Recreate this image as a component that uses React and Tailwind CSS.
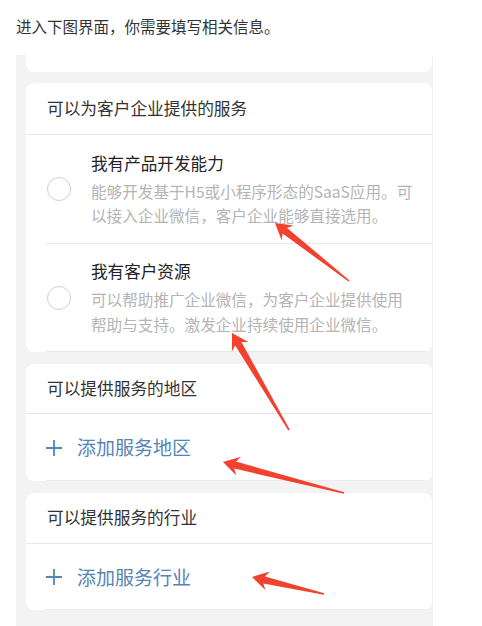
import React from "react";

const arrows = [
  [275, 223, 349, 281],
  [232, 333, 289, 430],
  [223, 462, 344, 493],
  [252, 577, 324, 594],
];

function arrowPoints([tx, ty, ex, ey]) {
  const dx = ex - tx, dy = ey - ty;
  const L = Math.hypot(dx, dy);
  const ux = dx / L, uy = dy / L;
  const px = -uy, py = ux;
  const headLen = 16, headW = 9.5, neckAt = 12.5, neckW = 3.6, tailW = 0.8;
  const pt = (a, w) => `${(tx + ux * a + px * w).toFixed(1)},${(ty + uy * a + py * w).toFixed(1)}`;
  return [
    pt(0, 0),
    pt(headLen, headW),
    pt(neckAt, neckW),
    pt(L, tailW),
    pt(L, -tailW),
    pt(neckAt, -neckW),
    pt(headLen, -headW),
  ].join(" ");
}

const font = { fontFamily: '"Noto Sans CJK SC", "Noto Sans", sans-serif' };

function Plus() {
  return (
    <svg width="16" height="16" viewBox="0 0 16 16" className="shrink-0">
      <line x1="8" y1="0" x2="8" y2="16" stroke="#5585b5" strokeWidth="1.8" />
      <line x1="0" y1="8" x2="16" y2="8" stroke="#5585b5" strokeWidth="1.8" />
    </svg>
  );
}

function Option({ title, lines, h }) {
  return (
    <div className={`ml-[20px] flex items-center border-b border-[#e8e8e8] ${h}`}>
      <div className="ml-[1px] w-[24px] h-[24px] shrink-0 rounded-full border border-[#cfcfcf]" />
      <div className="ml-[20px] flex-1">
        <div className="text-[16.6px] leading-[24px] text-[#222]">{title}</div>
        <div className="mt-[4px] text-[15.6px] leading-[24.5px] text-[#b4b4b4]">
          {lines.map((l) => (
            <div key={l} className="whitespace-nowrap">{l}</div>
          ))}
        </div>
      </div>
    </div>
  );
}

function Header({ children, h }) {
  return (
    <div className={`${h} flex items-center pl-[21px] border-b border-[#e8e8e8] text-[16.7px] text-[#333]`}>
      {children}
    </div>
  );
}

function AddRow({ label, h }) {
  return (
    <div className={`${h} flex items-center pl-[20px] gap-[15px] relative`}>
      <Plus />
      <span className="text-[19px] text-[#5585b5]">{label}</span>
      <div className="absolute bottom-0 left-[20px] right-0 h-px bg-[#ececec]" />
    </div>
  );
}

export default function App() {
  return (
    <div className="relative w-[482px] h-[626px] bg-white overflow-hidden" style={font}>
      <div className="h-[55px] flex items-center pl-[16px] pb-[2px] text-[15.5px] text-[#333]">
        进入下图界面，你需要填写相关信息。
      </div>
      <div className="w-[417px] ml-[16px] h-[571px] bg-[#f3f3f3] pl-[10px] pr-[1px] flex flex-col">
        <div className="h-[17px] bg-white rounded-b-lg" />
        <div className="mt-[11px] bg-white rounded-lg overflow-hidden">
          <Header h="h-[52px]">可以为客户企业提供的服务</Header>
          <Option
            h="h-[109px]"
            title="我有产品开发能力"
            lines={["能够开发基于H5或小程序形态的SaaS应用。可", "以接入企业微信，客户企业能够直接选用。"]}
          />
          <Option
            h="h-[108px]"
            title="我有客户资源"
            lines={["可以帮助推广企业微信，为客户企业提供使用", "帮助与支持。激发企业持续使用企业微信。"]}
          />
        </div>
        <div className="mt-[12px] bg-white rounded-lg overflow-hidden">
          <Header h="h-[50px]">可以提供服务的地区</Header>
          <AddRow label="添加服务地区" h="h-[67px]" />
        </div>
        <div className="mt-[12px] bg-white rounded-lg overflow-hidden">
          <Header h="h-[51px]">可以提供服务的行业</Header>
          <AddRow label="添加服务行业" h="h-[66px]" />
        </div>
      </div>
      <svg className="absolute inset-0 pointer-events-none" width="482" height="626">
        {arrows.map((a, i) => (
          <polygon key={i} points={arrowPoints(a)} fill="#f2412e" />
        ))}
      </svg>
    </div>
  );
}
